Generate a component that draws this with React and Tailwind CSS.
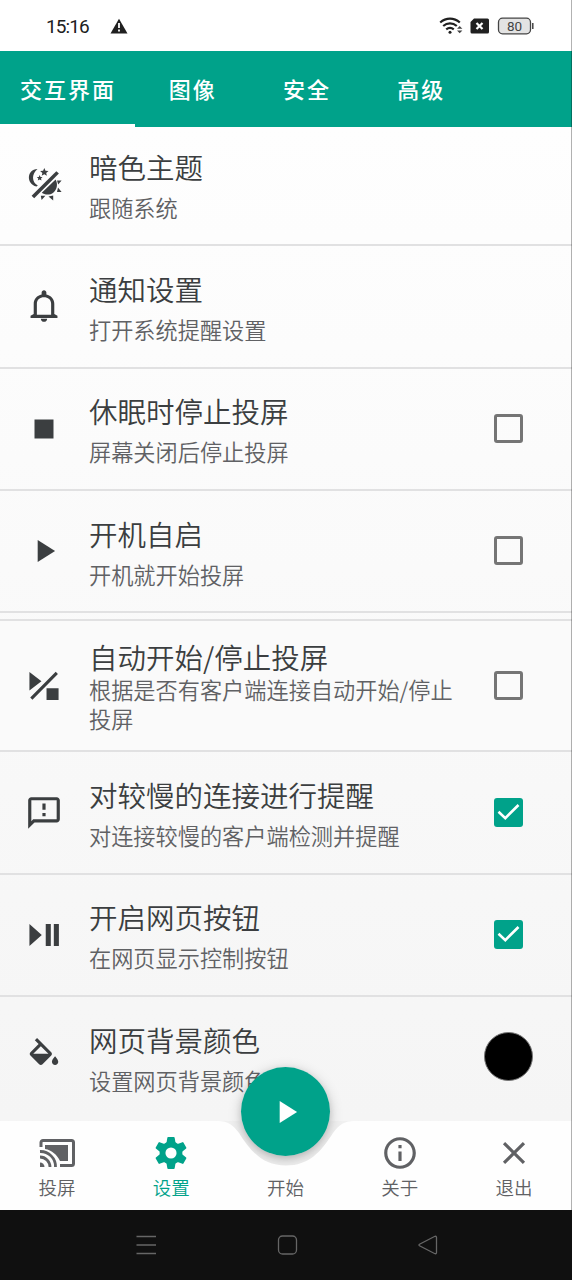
import React from 'react'

const tabs = ['交互界面', '图像', '安全', '高级']

function ThemeIcon() {
  return (
    <svg viewBox="0 0 38 38" className="w-[38px] h-[38px] fill-current relative -top-[2px]">
      <path d="M12.500 4C1.500 4.500 1 19 11.500 21.600L12.800 20.500C6.500 17 6.500 9 12.500 4z" />
      <path d="M19.300 3l1.200 2.700 3 .3-2.300 1.900.7 2.900-2.600-1.500-2.600 1.500.7-2.900-2.300-1.900 3-.3zM14.600 10l.9 1.900 2 .2-1.500 1.400.5 2.100-1.900-1.100-1.800 1.100.5-2.100-1.500-1.400 2-.2z" />
      <path d="M31.300 6.200l2.600 2.400L9.200 33.200l-2.600-2.500z" />
      <path d="M30.600 14.500c2.500 4.500 1.500 10-2.100 12.900-3.700 3-8.800 2.600-11.700.3z" />
      <path d="M32 15.400h4.600l-3.400 4.100zM33 22.600l3.600 4.400h-4.600zM23.500 31.500l4.700-1v4.900zM15.800 30.800h4.600l-3.800 4.200z" />
    </svg>
  )
}

function Icon({ d, className = 'w-[38px] h-[38px]' }) {
  return (
    <svg viewBox="0 0 24 24" className={`${className} fill-current`}>
      <path d={d} />
    </svg>
  )
}

function GearIcon() {
  const tooth = 'M9.700 2.300q.1-.4.5-.4h3.600q.4 0 .5.400l.8 4.700v10l-.8 4.700q-.1.400-.5.400h-3.600q-.4 0-.5-.4l-.8-4.700V7z'
  return (
    <svg viewBox="0 0 24 24" className="w-[38px] h-[38px] fill-current">
      <circle cx="12" cy="12" r="7.200" />
      <path d={tooth} />
      <path d={tooth} transform="rotate(60 12 12)" />
      <path d={tooth} transform="rotate(120 12 12)" />
      <circle cx="12" cy="12" r="3.500" fill="#fefefe" />
    </svg>
  )
}

const paths = {
  bell: 'M12 22c1.100 0 2-.9 2-2h-4c0 1.100.9 2 2 2zm6.500-5v-6.500c0-3.070-2.130-5.140-5-5.820V3.500c0-.83-.67-1.500-1.500-1.500s-1.500.67-1.500 1.500v1.180C7.630 5.360 5.500 7.430 5.500 10.500V17l-2 1.200v1.300h17v-1.300zm-2 .5h-9v-7c0-2.480 2.010-4 4.500-4s4.500 1.520 4.500 4z',
  stop: 'M6 6h12v12H6z',
  play: 'M8 5v14l11-7z',
  auto: 'M2.800 3.200v11.600l7.600-5.800zM19.400 3l1.400 1.400L4.700 20.700l-1.400-1.400zM13.600 13.400h7.600v7.500h-7.600z',
  feedback: 'M20 2H4c-1.100 0-1.990.9-1.990 2L2 22l4-4h14c1.100 0 2-.9 2-2V4c0-1.100-.9-2-2-2zm0 14H5.170L4 17.170V4h16v12zM11 12h2v2h-2zm0-6h2v4h-2z',
  playPause: 'M2.800 5v14l7.800-7zM13.100 5h3.200v14h-3.200zM18.200 5h3.200v14h-3.200z',
  fill: 'M16.560 8.940L7.620 0 6.210 1.410l2.380 2.380-5.150 5.150c-.59.59-.59 1.540 0 2.120l5.500 5.500c.29.29.68.44 1.060.44s.77-.15 1.060-.44l5.500-5.500c.59-.58.59-1.530 0-2.120zM5.210 10L10 5.210 14.790 10H5.210zM19 11.500s-2 2.170-2 3.500c0 1.100.9 2 2 2s2-.9 2-2c0-1.330-2-3.500-2-3.500z',
  info: 'M11 7h2v2h-2zm0 4h2v6h-2zm1-9C6.480 2 2 6.480 2 12s4.480 10 10 10 10-4.480 10-10S17.520 2 12 2zm0 18c-4.410 0-8-3.590-8-8s3.590-8 8-8 8 3.590 8 8-3.590 8-8 8z',
  close: 'M19 6.410L17.590 5 12 10.590 6.410 5 5 6.410 10.590 12 5 17.590 6.410 19 12 13.410 17.590 19 19 17.590 13.410 12z',
}

const items = [
  { icon: <ThemeIcon />, title: '暗色主题', text: '跟随系统', height: 'h-[119.400px]', pad: 'pt-[2px]' },
  { icon: <Icon d={paths.bell} />, title: '通知设置', text: '打开系统提醒设置' },
  { icon: <Icon d={paths.stop} />, title: '休眠时停止投屏', text: '屏幕关闭后停止投屏', control: 'off' },
  { icon: <Icon d={paths.play} />, title: '开机自启', text: '开机就开始投屏', control: 'off' },
  { icon: <Icon d={paths.auto} />, title: '自动开始/停止投屏', text: '根据是否有客户端连接自动开始/停止投屏', control: 'off', group: true, height: 'h-[133px]', pad: 'pt-[4px]' },
  { icon: <Icon d={paths.feedback} />, title: '对较慢的连接进行提醒', text: '对连接较慢的客户端检测并提醒', control: 'on' },
  { icon: <Icon d={paths.playPause} />, title: '开启网页按钮', text: '在网页显示控制按钮', control: 'on' },
  { icon: <Icon d={paths.fill} />, title: '网页背景颜色', text: '设置网页背景颜色', control: 'color' },
]

function Control({ type }) {
  if (type === 'off') return <div className="w-[29px] h-[29px] rounded-[3px] border-3 border-[#757575]" />
  if (type === 'on') {
    return (
      <div className="w-[29px] h-[29px] rounded-[3px] bg-[#00a28a]">
        <svg viewBox="0 0 29 29" className="w-full h-full" fill="none" stroke="white" strokeWidth="2.6">
          <path d="M4.500 13.800l6.800 6.300L24.500 7" />
        </svg>
      </div>
    )
  }
  if (type === 'color') return <div className="w-[49px] h-[49px] rounded-full bg-black border border-[#777]" />
  return null
}

function Row({ item }) {
  return (
    <div className={`${item.height || 'h-[122.200px]'} shrink-0 flex items-center border-b-2 border-[#e1e1e2] pl-[25px] last:border-transparent ${item.group ? 'mt-[6.500px] border-t-2 bg-[#fafafa]' : ''}`}>
      <div className="w-[64px] shrink-0 text-[#3b3e40]">{item.icon}</div>
      <div className={`w-[375px] ${item.pad || 'pt-[5.500px]'}`}>
        <div className={`text-[28.500px] text-[#3b3e40] whitespace-nowrap ${item.group ? 'leading-[30px]' : 'leading-[41px]'}`}>{item.title}</div>
        <div className={`text-[22.200px] text-[#606164] ${item.group ? 'pt-[3px] leading-[29.500px]' : 'leading-[41px]'}`}>{item.text}</div>
      </div>
      <div className="w-[88px] flex justify-center">
        <Control type={item.control} />
      </div>
    </div>
  )
}

function StatusBar() {
  return (
    <div className="h-[51px] shrink-0 bg-white flex items-center pl-[46px] pr-[37px] text-[#202020]">
      <span className="font-[Roboto] font-normal text-[19px] tracking-[-0.900px] w-[64px] leading-none pt-[1px]">15:16</span>
      <svg viewBox="0 0 18 16" className="w-[18px] h-[16px]">
        <path d="M9 .8L17.500 15.500H.5z" fill="#202020" />
        <path d="M9 5v5M9 11.500v2" stroke="white" strokeWidth="1.800" />
      </svg>
      <svg viewBox="0 0 96 20" className="w-[96px] h-[20px] ml-auto" fill="none">
        <g stroke="#202020" strokeWidth="2.200">
          <path d="M1.200 6.500c5.800-5.200 13.800-5.200 19.600 0M4.200 10c4-3.600 9.600-3.600 13.600 0M7.200 13.400c2.400-2 5.200-2 7.600 0" />
        </g>
        <circle cx="11" cy="16.300" r="1.500" fill="#202020" />
        <path d="M18 12.800l2.700-2.700 2.700 2.700zM18 14.500l2.700 2.700 2.700-2.700z" fill="#444" />
        <path d="M35 2.500h13.500a1.500 1.500 0 0 1 1.500 1.500v12a1.500 1.500 0 0 1-1.500 1.500H33a1.500 1.500 0 0 1-1.500-1.500V6z" fill="#202020" />
        <path d="M37.500 7l6 6m0-6l-6 6" stroke="white" strokeWidth="2.200" />
        <rect x="59.500" y="2.200" width="32" height="15.600" rx="4" fill="#e3e3e3" stroke="#444" strokeWidth="1.300" />
        <path d="M93.800 7v6" stroke="#444" strokeWidth="1.500" />
        <text x="75.500" y="14.800" textAnchor="middle" fontSize="13.500" fontWeight="400" fill="#444" fontFamily="Roboto">80</text>
      </svg>
    </div>
  )
}

function CastIcon() {
  return (
    <svg viewBox="0 0 36 30" className="w-[36px] h-[38px]" fill="none" stroke="#606164" strokeWidth="3">
      <path d="M2 9V4.500a2 2 0 0 1 2-2h28.500a2 2 0 0 1 2 2v21a2 2 0 0 1-2 2H21" />
      <path d="M6 7h23v16H21C18 17 13 12 6 11z" fill="#606164" stroke="none" />
      <path d="M1 13.500A15 15 0 0 1 16.500 29M1 19a10 10 0 0 1 10 10" strokeWidth="2.800" />
      <path d="M1 24.500A4.500 4.500 0 0 1 5.500 29H1z" fill="#606164" stroke="none" />
    </svg>
  )
}

const navItems = [
  { label: '投屏', icon: <CastIcon /> },
  { label: '设置', icon: <GearIcon />, active: true },
  { label: '开始' },
  { label: '关于', icon: <Icon d={paths.info} /> },
  { label: '退出', icon: <Icon d={paths.close} /> },
]

function BottomNav() {
  return (
    <div className="relative h-[89px] shrink-0 bg-[#f0f0f0]">
      <div className="absolute left-[241px] -top-[54px] w-[89px] h-[89px] rounded-full shadow-[0_3px_14px_rgba(0,0,0,0.2)]" />
      <svg viewBox="0 0 572 89" className="absolute inset-0 w-[572px] h-[89px]">
        <path d="M0 0H218C228 0 233 4 239 12C251 31 263 44.500 286 44.500S321 31 333 12C339 4 344 0 354 0H572V89H0z" fill="#fefefe" />
      </svg>
      <div className="absolute left-[241px] -top-[54px] w-[89px] h-[89px] rounded-full bg-[#00a28a] shadow-[0_2px_6px_rgba(0,0,0,0.1)] flex items-center justify-center text-white">
        <Icon d={paths.play} />
      </div>
      <div className="relative h-full flex pt-[13px] pr-[1px]">
        {navItems.map((item) => (
          <div
            key={item.label}
            className={`flex-1 flex flex-col items-center ${item.active ? 'text-[#00a28a]' : 'text-[#606164]'}`}
          >
            <div className="h-[38px]">{item.icon}</div>
            <div className="text-[18.500px] leading-[31px]">{item.label}</div>
          </div>
        ))}
      </div>
    </div>
  )
}

export default function App() {
  return (
    <div className="w-[572px] h-[1280px] overflow-hidden flex flex-col font-['Noto_Sans_CJK_SC',sans-serif] font-[350]">
      <div className="relative h-[1210px] shrink-0 flex flex-col">
        <StatusBar />
        <div className="h-[76px] shrink-0 bg-[#00a28a] flex text-white font-medium text-[22px] tracking-[2px]">
          {tabs.map((tab, i) => (
            <div
              key={tab}
              className={`flex items-center justify-center pt-[2px] pl-[1px] border-b-3 ${i === 0 ? 'w-[135px] border-white' : 'w-[114.300px] border-transparent'}`}
            >
              {tab}
            </div>
          ))}
        </div>
        <div className="h-[994px] shrink-0 overflow-hidden flex flex-col bg-linear-to-b from-[#fefefe] to-[#f5f5f5]">
          {items.map((item) => (
            <Row key={item.title} item={item} />
          ))}
        </div>
        <BottomNav />
        <div className="absolute right-0 top-0 w-px h-full bg-black/30" />
      </div>
      <div className="h-[70px] shrink-0 bg-[#101010]">
        <svg viewBox="0 0 572 70" className="w-[572px] h-[70px]" fill="none" stroke="#666" strokeWidth="1.300">
          <path d="M136.500 26.500h19.500M136.500 35h19.500M136.500 43.500h19.500" />
          <rect x="278.500" y="26" width="18" height="18" rx="4" />
          <path d="M434.500 26.500L419.500 34.200q-1 .8 0 1.600L434.500 43.500q2 .8 2-1V27.500q0-1.800-2-1z" />
        </svg>
      </div>
    </div>
  )
}
